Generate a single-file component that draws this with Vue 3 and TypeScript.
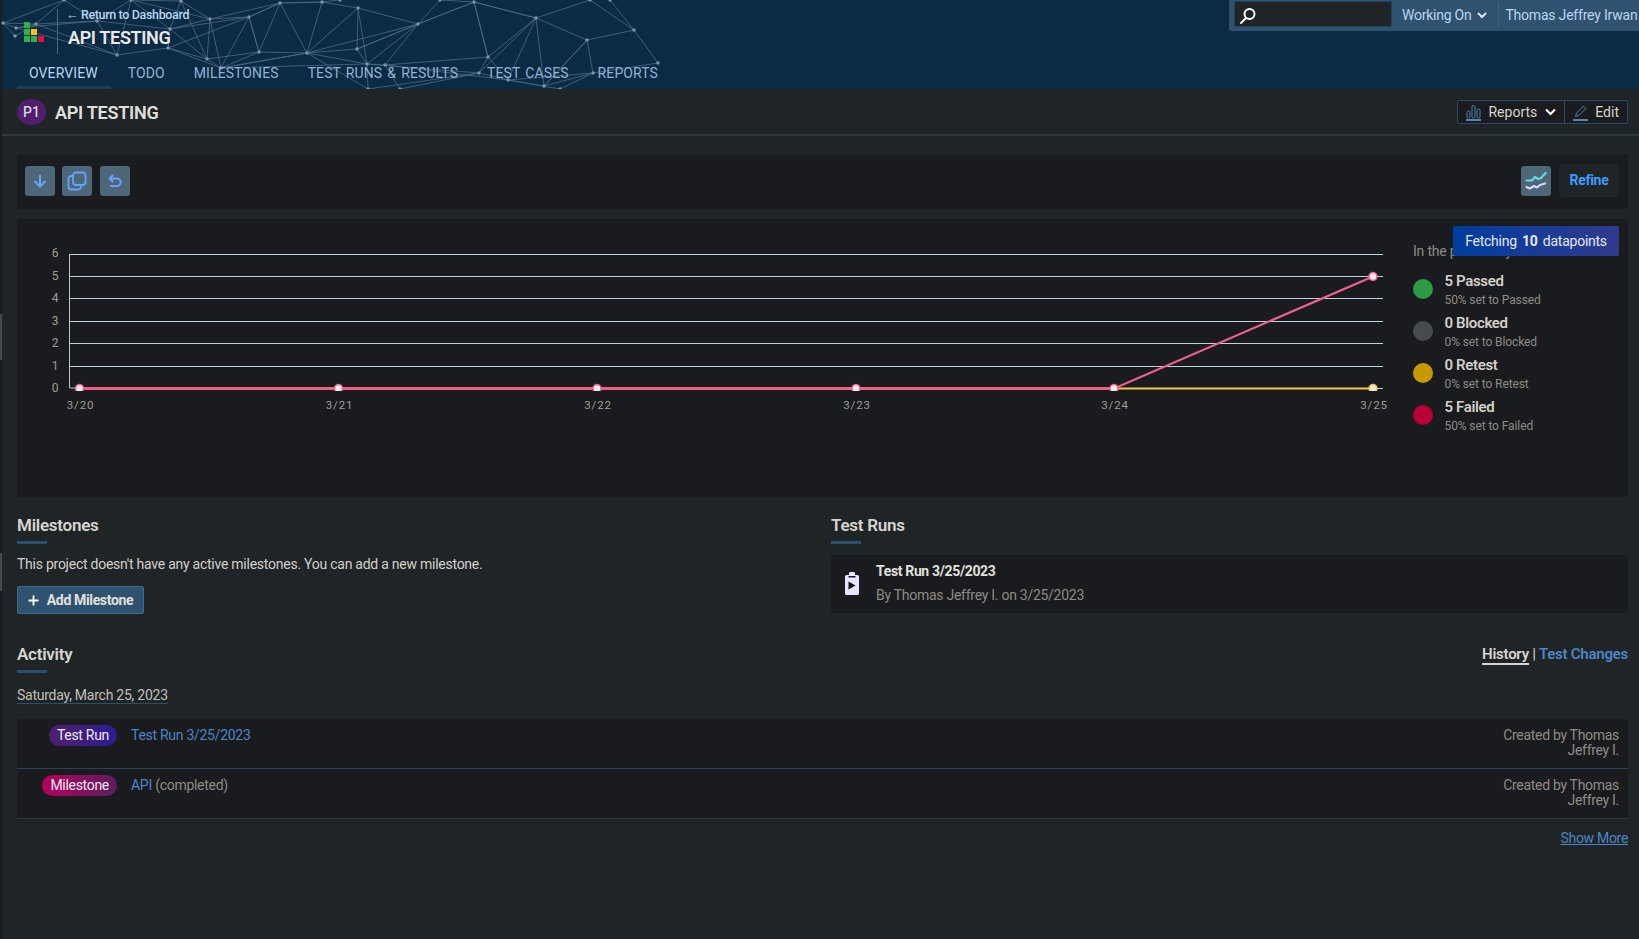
<script setup lang="ts">
const P: Record<string, [number, number]> = {
  A: [64, 0], B: [3, 23], C: [15, 36], D: [16, 28], E: [36, 24], F: [97, 21], G: [131, 0], H: [181, 1], I: [170, 29],
  J: [210, 19], K: [249, 17], L: [280, 3], M: [322, 2], N: [358, 8], O: [418, 24], Q: [117, 55], R: [168, 48], S: [207, 59],
  T: [259, 52], U: [307, 53], V: [357, 49], W: [221, 68], X: [367, 64], Y: [385, 65], Z: [474, 2], a: [536, 18], b: [488, 57],
  c: [479, 73], d: [508, 80], e: [544, 86], f: [587, 40], g: [634, 30], h: [658, 63], i: [593, 73], j: [560, 89], k: [368, 89],
  l: [400, 89], m: [590, 0], n: [440, 0], o: [340, 0], p: [610, 0]
};
const E = 'A-B A-F A-E B-E B-D B-C C-E D-E D-F E-F F-G F-Q F-I G-I G-H G-Q G-J H-I H-J H-S I-R I-S I-J I-K J-K J-S J-W K-L K-T K-R K-W L-M L-K L-U L-T L-J M-U M-N M-L N-O N-V N-X N-U O-V O-U O-Z O-Y O-X Q-R Q-E Q-D R-S R-W R-I S-T S-W T-U T-W T-K U-V U-X U-W U-k V-X V-O W-X W-U X-Y X-k Y-b Y-d Y-l b-Z b-a b-c b-d c-a c-d c-l c-k c-X d-e d-a d-i d-j e-i e-f a-f a-Z a-m a-e f-g f-i f-e g-h g-p g-m h-i i-j Z-a Z-n Z-b Z-O o-M n-O'
  .split(' ').map((s) => s.split('-'))
  .map(([a, b]) => ({ x1: P[a][0], y1: P[a][1], x2: P[b][0], y2: P[b][1] }));
const nodes = Object.values(P);

const tabs = ['Overview', 'Todo', 'Milestones', 'Test Runs & Results', 'Test Cases', 'Reports'];
const gridY = [35, 57, 79, 102, 124, 147];
const yLabels = [
  { t: '6', y: 34 }, { t: '5', y: 57 }, { t: '4', y: 79 }, { t: '3', y: 102 }, { t: '2', y: 124 }, { t: '1', y: 147 }, { t: '0', y: 169 }
];
const xs = [62.5, 321.5, 580, 839, 1097, 1356];
const xLabels = ['3/20', '3/21', '3/22', '3/23', '3/24', '3/25'];
const legend = [
  { title: '5 Passed', sub: '50% set to Passed', color: '#2f9a44' },
  { title: '0 Blocked', sub: '0% set to Blocked', color: '#474b4e' },
  { title: '0 Retest', sub: '0% set to Retest', color: '#c99a00' },
  { title: '5 Failed', sub: '50% set to Failed', color: '#b80036' }
];
const rows = [
  { badge: 'Test Run', cls: 'run', link: 'Test Run 3/25/2023', extra: '' },
  { badge: 'Milestone', cls: 'mile', link: 'API', extra: '(completed)' }
];
</script>

<template>
  <div class="app">
    <i class="edge edge-a"></i>
    <i class="edge edge-b"></i>
    <header class="header">
      <svg class="net" width="680" height="89" viewBox="0 0 680 89" aria-hidden="true">
        <line v-for="(l, i) in E" :key="i" :x1="l.x1" :y1="l.y1" :x2="l.x2" :y2="l.y2" stroke="#4f6a84" stroke-width="0.8" />
        <circle v-for="(n, i) in nodes" :key="'n' + i" :cx="n[0]" :cy="n[1]" r="1.7" fill="#7f93a6" />
      </svg>
      <div class="top">
        <div class="brand">
          <div class="logo">
            <i class="g"></i><i></i><i></i>
            <i class="g"></i><i class="y"></i><i></i>
            <i class="g"></i><i class="g"></i><i class="r"></i>
          </div>
          <div class="brand-text">
            <a class="back">← Return to Dashboard</a>
            <div class="proj">API TESTING</div>
          </div>
        </div>
        <div class="userbar">
          <div class="search">
            <svg width="18" height="18" viewBox="0 0 18 18" fill="none" stroke="#fff" stroke-width="2">
              <circle cx="10.5" cy="7" r="5" />
              <path d="M7 11 L2 16" stroke-linecap="round" />
            </svg>
          </div>
          <span class="ub-item">Working On
            <svg width="10" height="7" viewBox="0 0 10 7" fill="none" stroke="#dfe8f0" stroke-width="2"><path d="M1 1l4 4 4-4" /></svg>
          </span>
          <span class="ub-item user">Thomas Jeffrey Irwan</span>
        </div>
      </div>
      <nav class="tabs">
        <a v-for="(t, i) in tabs" :key="t" class="tab" :class="{ active: i === 0 }">{{ t }}</a>
      </nav>
    </header>

    <div class="titlebar">
      <div class="title-left">
        <span class="p1">P1</span>
        <h1>API TESTING</h1>
      </div>
      <div class="btn-group">
        <button class="gbtn">
          <svg width="15" height="17" viewBox="0 0 15 17" fill="none" stroke="#4d84b0" stroke-width="1">
            <rect x="1" y="7" width="3" height="7" rx="1.5" /><rect x="6" y="1.5" width="3" height="12.5" rx="1.5" /><rect x="11" y="5" width="3" height="9" rx="1.5" />
            <path d="M0 16h15" stroke="#6ea0cc" stroke-width="1.6" />
          </svg>
          Reports
          <svg class="chev" width="11" height="8" viewBox="0 0 11 8" fill="none" stroke="#fff" stroke-width="2"><path d="M1 1.5l4.5 4.5 4.5-4.5" /></svg>
        </button>
        <button class="gbtn">
          <svg width="15" height="17" viewBox="0 0 15 17" fill="none" stroke="#4d84b0" stroke-width="1">
            <path d="M2.5 12.5l1-3.5 7-7 2.5 2.5-7 7z" />
            <path d="M0 16h15" stroke="#6ea0cc" stroke-width="1.6" />
          </svg>
          Edit
        </button>
      </div>
    </div>

    <main class="main">
      <section class="toolbar card">
        <div class="tools">
          <button class="tool">
            <svg width="14" height="14" viewBox="0 0 14 14" fill="none" stroke="#66a3ff" stroke-width="2" stroke-linecap="round" stroke-linejoin="round"><path d="M7 1.5v10.500M2 7.500l5 5 5-5" /></svg>
          </button>
          <button class="tool">
            <svg width="20" height="20" viewBox="0 0 20 20" fill="none" stroke="#66a3ff" stroke-width="1.8"><rect x="6" y="1.500" width="12.500" height="12.500" rx="3" /><path d="M6 5H4.500A3 3 0 0 0 1.500 8v7.500a3 3 0 0 0 3 3H11a3 3 0 0 0 3-3V14" /></svg>
          </button>
          <button class="tool third">
            <svg width="14" height="14" viewBox="0 0 14 14" fill="none" stroke="#66a3ff" stroke-width="2" stroke-linecap="round" stroke-linejoin="round"><path d="M4.500 1.500L1.500 4.500l3 3M1.500 4.500H9a3.500 3.500 0 0 1 0 7.500H3" /></svg>
          </button>
        </div>
        <div class="tools right">
          <button class="tool">
            <svg width="22" height="20" viewBox="0 0 22 20" fill="none" stroke-width="2.200" stroke-linecap="round" stroke-linejoin="round">
              <path d="M1.500 9.500H7L10 6l3 2 3-1 4.500-5" stroke="#67d7e3" />
              <path d="M1.500 16l3.500 1.500L9 15l3 1.500L15 14l5-1.500" stroke="#dcd2ff" />
            </svg>
          </button>
          <button class="refine">Refine</button>
        </div>
      </section>

      <section class="chart card">
        <svg class="plot" width="1379" height="278" viewBox="0 0 1379 278">
          <defs><clipPath id="pc"><rect x="0" y="0" width="1379" height="172" /></clipPath></defs>
          <path v-for="y in gridY" :key="y" :d="`M52 ${y + 0.5}H1366`" stroke="#bcd3e6" stroke-width="1" fill="none" />
          <path d="M52.500 35V169H60" stroke="#bfc4c6" stroke-width="1" fill="none" />
          <path d="M1356 169.500h10" stroke="#bcd3e6" stroke-width="1" fill="none" />
          <text v-for="l in yLabels" :key="l.t" x="38" :y="l.y" class="ylab">{{ l.t }}</text>
          <g clip-path="url(#pc)">
            <path d="M1097 169.500H1356" stroke="#f2c94c" stroke-width="2.200" fill="none" />
            <path d="M62.500 169.500H1097" stroke="#ef5f80" stroke-width="2.800" fill="none" />
            <path d="M1097 169.500L1356 57.500" stroke="#ef6090" stroke-width="2.200" fill="none" />
            <circle cx="1356" cy="169.500" r="4" fill="#eee7d8" stroke="#f2c94c" stroke-width="1.500" />
            <circle v-for="x in xs.slice(0, 5)" :key="x" :cx="x" cy="169.500" r="4" fill="#eee" stroke="#f06292" stroke-width="1.500" />
            <circle cx="1356" cy="57.500" r="4" fill="#f4e6ea" stroke="#f06292" stroke-width="1.500" />
          </g>
          <text v-for="(l, i) in xLabels" :key="l" :x="xs[i] + 1" y="186" class="xlab">{{ l }}</text>
        </svg>
        <div class="legend">
          <div class="leg-head">In the past 7 days</div>
          <div v-for="l in legend" :key="l.title" class="leg-row">
            <i class="dot" :style="{ background: l.color }"></i>
            <div>
              <div class="leg-title">{{ l.title }}</div>
              <div class="leg-sub">{{ l.sub }}</div>
            </div>
          </div>
        </div>
        <div class="toast">Fetching <b>10</b> datapoints</div>
      </section>

      <div class="cols">
        <section>
          <h2>Milestones</h2>
          <p class="para">This project doesn't have any active milestones. You can add a new milestone.</p>
          <button class="add">
            <svg width="11" height="11" viewBox="0 0 11 11" stroke="#fff" stroke-width="1.800"><path d="M5.500 0.500v10M0.500 5.500h10" /></svg>
            Add Milestone
          </button>
        </section>
        <section>
          <h2>Test Runs</h2>
          <div class="run-card">
            <svg width="16" height="24" viewBox="0 0 16 24">
              <path d="M5 3V2a3 3 0 0 1 6 0v1h2.500A1.500 1.500 0 0 1 15 4.500V21.500A1.500 1.500 0 0 1 13.500 23H2.500A1.500 1.500 0 0 1 1 21.500V4.500A1.500 1.500 0 0 1 2.500 3z" fill="#e9e2ff" />
              <rect x="4.500" y="4" width="7" height="1.500" fill="#16181b" />
              <path d="M4.500 9.500l7 4-7 4z" fill="#111" />
            </svg>
            <div class="run-text">
              <div class="run-title">Test Run 3/25/2023</div>
              <div class="run-sub">By Thomas Jeffrey I. on 3/25/2023</div>
            </div>
          </div>
        </section>
      </div>

      <section class="activity">
        <div class="act-head">
          <h2>Activity</h2>
          <div class="switch"><a class="on">History</a><span> | </span><a>Test Changes</a></div>
        </div>
        <div class="date">Saturday, March 25, 2023</div>
        <div class="table">
          <div v-for="r in rows" :key="r.badge" class="row">
            <div class="badge-col"><span class="badge" :class="r.cls">{{ r.badge }}</span></div>
            <div class="row-main"><a>{{ r.link }}</a> <span v-if="r.extra">{{ r.extra }}</span></div>
            <div class="row-by">Created by Thomas<br />Jeffrey I.</div>
          </div>
        </div>
        <div class="more"><a>Show More</a></div>
      </section>
    </main>
  </div>
</template>

<style>
html, body { margin: 0; background: #1f2426; }
</style>

<style scoped>
.app {
  position: relative;
  height: 939px;
  padding-left: 2px;
  box-sizing: border-box;
  background: #1a1d1f;
  font-family: Roboto, "Liberation Sans", sans-serif;
  font-size: 14px;
  color: #d8d4cc;
  overflow: hidden;
}
.edge { position: absolute; left: 0; width: 2px; background: #45494c; }
.edge-a { top: 314px; height: 46px; }
.edge-b { top: 553px; height: 38px; }
.header {
  position: relative;
  height: 89px;
  background: #0b2a44;
  display: flex;
  flex-direction: column;
}
.net { position: absolute; left: -2px; top: 0; }
.top { position: relative; height: 60px; display: flex; justify-content: space-between; align-items: flex-start; }
.brand { display: flex; padding-left: 22px; padding-top: 9px; }
.logo {
  display: grid;
  grid-template-columns: repeat(3, 6px);
  grid-auto-rows: 6px;
  gap: 1px;
  margin-top: 13px;
  width: 20px;
}
.logo i { display: block; }
.logo .g { background: #2fb04a; }
.logo .y { background: #ffc107; }
.logo .r { background: #e8093f; }
.brand-text { margin-left: 13px; padding-left: 10px; border-left: 1px solid #3e6a8d; height: 45px; }
.back { display: block; font-size: 12.5px; line-height: 16px; color: #b9d5f0; font-weight: 500; letter-spacing: -0.35px; margin: -2px 0 0 -2px; }
.proj { font-size: 18px; line-height: 22px; margin-top: 4px; font-weight: 600; color: #ebe9e6; letter-spacing: -0.35px; }
.userbar {
  width: 410px;
  height: 31px;
  background: #2f5270;
  border-radius: 0 0 0 3px;
  display: flex;
  align-items: center;
  padding-left: 5px;
  box-sizing: border-box;
  white-space: nowrap;
}
.search {
  width: 158px;
  height: 26px;
  margin-bottom: 3px;
  box-sizing: border-box;
  background: #1f2426;
  border: 1px solid #22405a;
  border-radius: 2px;
  display: flex;
  align-items: center;
  padding: 4px 0 0 4px;
  flex: none;
}
.ub-item {
  color: #b9d5f0;
  font-size: 14px;
  letter-spacing: -0.25px;
  padding: 0 11px 1px 10px;
  display: inline-flex;
  align-items: center;
  gap: 6px;
  flex: none;
}
.ub-item.user { border-left: 1px solid #3f6482; padding: 0 0 0 6px; height: 24px; margin-bottom: 2px; letter-spacing: -0.2px; }
.tabs { position: relative; display: flex; padding-left: 15px; gap: 5px; height: 29px; }
.tab {
  padding: 0 12px;
  line-height: 26px;
  font-size: 14px;
  text-transform: uppercase;
  color: #8fb4d6;
  letter-spacing: 0.1px;
  word-spacing: 1.5px;
  border-bottom: 3px solid transparent;
  white-space: nowrap;
}
.tab.active { color: #b9d5f0; border-bottom-color: #1f3a55; padding-right: 13px; }
.titlebar {
  height: 47px;
  box-sizing: border-box;
  background: #1f2426;
  border-bottom: 2px solid #2b3840;
  display: flex;
  justify-content: space-between;
  align-items: center;
  padding: 1px 11px 0 15px;
}
.title-left { display: flex; align-items: center; gap: 9px; }
.p1 {
  width: 29px;
  height: 26px;
  border-radius: 50%;
  background: #4f1f6c;
  color: #dccfe2;
  font-size: 14px;
  font-weight: 500;
  display: flex;
  align-items: center;
  justify-content: center;
}
h1 { margin: 0; font-size: 18px; font-weight: 600; color: #e2e0dc; letter-spacing: -0.25px; }
.btn-group { display: flex; height: 24px; border: 1px solid #2b4a63; border-radius: 2px; background: #191b1e; box-sizing: border-box; }
.gbtn {
  background: none;
  border: 0;
  padding: 0 8px 0 8px;
  color: #d8d4cc;
  font: inherit;
  font-size: 14px;
  display: flex;
  align-items: center;
  gap: 7px;
}
.gbtn + .gbtn { border-left: 1px solid #2b4a63; }
.chev { margin-left: 1px; }
.main { background: #1f2426; padding: 18px 11px 0 15px; height: 803px; box-sizing: border-box; }
.card { background: #191b1e; border-radius: 2px; }
.toolbar { height: 55px; display: flex; justify-content: space-between; align-items: center; padding: 0 9px 2px 8px; box-sizing: border-box; }
.tools { display: flex; gap: 7px; align-items: center; }
.tools .third { margin-left: 1px; }
.tools.right { gap: 8px; }
.tool {
  width: 30px;
  height: 30px;
  background: #4d6678;
  border: 0;
  border-radius: 3px;
  padding: 0;
  display: flex;
  align-items: center;
  justify-content: center;
}
.refine {
  width: 60px;
  height: 33px;
  background: #1f2426;
  border: 0;
  border-radius: 3px;
  color: #3f9bff;
  font: inherit;
  font-weight: 700;
  font-size: 14px;
  letter-spacing: -0.3px;
  padding: 0 0 1px;
}
.chart { position: relative; margin-top: 10px; height: 278px; display: flex; }
.plot { display: block; flex: none; }
.ylab { fill: #a39e93; font-size: 12px; text-anchor: middle; dominant-baseline: central; }
.xlab { fill: #a39e93; font-size: 11.5px; text-anchor: middle; letter-spacing: 0.9px; dominant-baseline: central; }
.legend { margin-left: 17px; padding-top: 22px; }
.leg-head { font-size: 14px; line-height: 20px; color: #8f8b83; letter-spacing: -0.2px; margin-bottom: 7px; }
.leg-row { display: flex; align-items: center; gap: 11.5px; height: 42px; }
.dot { width: 20px; height: 20px; border-radius: 50%; flex: none; }
.leg-title { font-size: 15px; line-height: 20px; padding-top: 1px; font-weight: 600; color: #d4d0c8; letter-spacing: -0.35px; }
.leg-sub { font-size: 12px; line-height: 18px; color: #8f8b83; letter-spacing: -0.1px; }
.toast {
  position: absolute;
  top: 7px;
  right: 9px;
  width: 166px;
  height: 30px;
  border-radius: 2px;
  background: linear-gradient(90deg, #003d9f, #303a8d);
  color: #e6e8ee;
  font-size: 14px;
  line-height: 30px;
  text-align: center;
  white-space: nowrap;
  letter-spacing: -0.25px;
}
.toast b { margin: 0 2px; font-weight: 700; }
.cols { display: grid; grid-template-columns: 1fr 1fr; gap: 17px; margin-top: 18px; }
h2 {
  margin: 0;
  font-size: 17px;
  line-height: 20px;
  font-weight: 600;
  color: #d9d6cf;
  letter-spacing: -0.25px;
}
h2::after { content: ""; display: block; width: 30px; height: 3px; margin-top: 6px; background: #2b4f6e; }
.para { margin: 10px 0 0; line-height: 20px; color: #d4d0c8; letter-spacing: -0.25px; white-space: nowrap; }
.add {
  margin-top: 12px;
  height: 28px;
  width: 127px;
  display: flex;
  align-items: center;
  justify-content: center;
  gap: 8px;
  background: #2f5270;
  border: 1px solid #3d6b90;
  border-radius: 2px;
  color: #e2e0dc;
  font: inherit;
  font-weight: 700;
  font-size: 14px;
  letter-spacing: -0.35px;
  padding: 0;
}
.run-card {
  margin-top: 11px;
  height: 58px;
  background: #191b1e;
  border-radius: 3px;
  display: flex;
  align-items: center;
  padding-left: 13px;
  gap: 16px;
  box-sizing: border-box;
}
.run-text { padding-bottom: 2px; }
.run-title { font-weight: 700; color: #e2e0dc; line-height: 20px; letter-spacing: -0.35px; }
.run-sub { margin-top: 4px; color: #8f8b83; line-height: 20px; letter-spacing: -0.27px; }
.activity { margin-top: 30px; }
.act-head { display: flex; justify-content: space-between; align-items: flex-start; }
.switch { font-size: 15px; font-weight: 600; line-height: 20px; letter-spacing: -0.25px; color: #4d86c6; }
.switch span { color: #c9c4ba; }
.switch .on { color: #d9d6cf; border-bottom: 2px solid #d9d6cf; }
.date {
  display: inline-block;
  margin-top: 14px;
  line-height: 16px;
  color: #c4c0b8;
  border-bottom: 1px solid #2b4f6e;
  letter-spacing: -0.25px;
}
.table { margin-top: 15px; }
.row {
  height: 50px;
  box-sizing: border-box;
  background: #191b1e;
  border-bottom: 1px solid #264359;
  padding: 6px 9px 0 0;
  display: flex;
  align-items: flex-start;
}
.row:last-child { border-bottom-color: #33373a; }
.badge-col { width: 100px; display: flex; justify-content: flex-end; flex: none; }
.badge {
  height: 21px;
  line-height: 21px;
  padding: 0 8px;
  border-radius: 11px;
  color: #f0e8f0;
  font-size: 14px;
  letter-spacing: -0.3px;
}
.badge.run { background: linear-gradient(90deg, #4f1f6c, #2a1d96); }
.badge.mile { background: linear-gradient(90deg, #b4005c, #5a1e60); }
.row-main { margin-left: 14px; line-height: 21px; color: #8f8b83; letter-spacing: -0.28px; flex: 1; }
.row-main a { color: #4d86c6; }
.row-by { margin-top: 3px; line-height: 15px; color: #8f8b83; text-align: right; letter-spacing: -0.3px; }
.more { margin-top: 10px; text-align: right; line-height: 18px; }
.more a { color: #4d86c6; text-decoration: underline; letter-spacing: -0.3px; }
</style>
